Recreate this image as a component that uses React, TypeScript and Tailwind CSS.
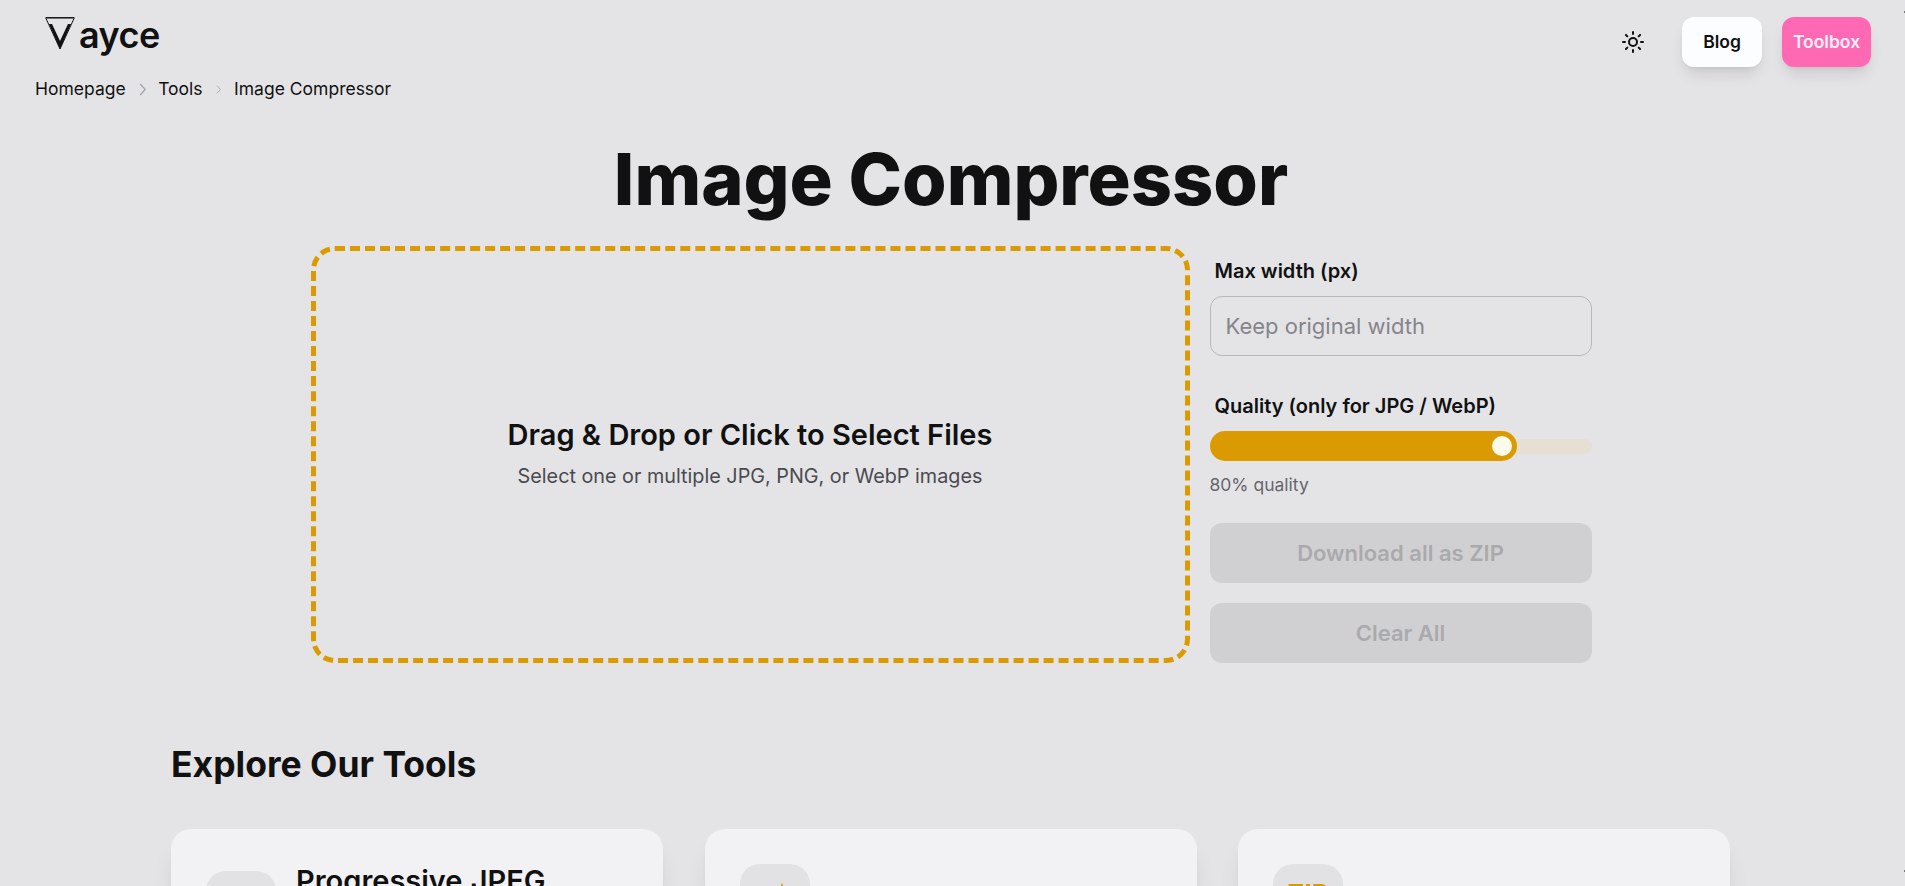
import { Sun } from "lucide-react";
import type { ReactNode } from "react";

const FONT = "[font-family:Inter,sans-serif]";

function Logo() {
  return (
    <div className="flex items-end pl-[45px] h-[56px]">
      <svg width="30" height="33" viewBox="0 0 30 33" className="mb-[6px] shrink-0">
        <path d="M0.5 0.8H29.5" stroke="#111" strokeWidth="1.5" fill="none" />
        <path d="M1 1.5L15 32L29 1.5" stroke="#111" strokeWidth="1" fill="none" />
        <path d="M4 7H7L15 24L23 7H26L15 32Z" fill="#111" />
      </svg>
      <span className="text-[36px] leading-[42px] font-semibold text-[#111] ml-[4px] -tracking-[0.5px]">ayce</span>
    </div>
  );
}

function Chevron({ h }: { h: number }) {
  return (
    <svg width={h / 2 + 1} height={h} viewBox="0 0 7 13" className="mx-[13px] shrink-0">
      <path d="M1 1L6 6.5L1 12" stroke="#a1a1aa" strokeWidth="1.2" fill="none" />
    </svg>
  );
}

function Header() {
  return (
    <header className="flex justify-between">
      <div>
        <Logo />
        <nav className="flex items-center pl-[35px] mt-[21px] text-[17.5px] text-[#111] h-[24px]">
          <span>Homepage</span>
          <Chevron h={13} />
          <span className="-ml-px">Tools</span>
          <Chevron h={9} />
          <span>Image Compressor</span>
        </nav>
      </div>
      <div className="flex items-center h-[50px] mt-[17px] pr-[34px]">
        <Sun size={24} strokeWidth={2} className="text-[#111] mr-[37px]" />
        <button className="w-[80px] h-[50px] rounded-xl bg-[#fcfdff] text-[17.5px] font-semibold text-[#111] shadow-lg mr-[20px]">Blog</button>
        <button className="w-[89px] h-[50px] rounded-xl bg-[#ff69b4] text-[17.5px] font-semibold text-[#fdf2f8] shadow-lg">Toolbox</button>
      </div>
    </header>
  );
}

function Controls() {
  return (
    <div className="w-[382px] flex flex-col">
      <label className="block text-[20px] font-semibold text-[#111] pl-[5px] leading-[28px] mt-[11px]">Max width (px)</label>
      <input
        placeholder="Keep original width"
        className="w-full h-[60px] mt-[11px] px-[15px] text-[22px] rounded-xl border border-[#b8b8bc] bg-transparent placeholder:text-[#85858a]"
      />
      <label className="block text-[20px] font-semibold text-[#111] pl-[5px] leading-[28px] mt-[36px]">Quality (only for JPG / WebP)</label>
      <div className="relative h-[30px] mt-[11px] flex items-center">
        <div className="w-full h-[15px] rounded-full bg-[#e6e0d4]" />
        <div className="absolute left-0 top-0 h-[30px] w-[307px] rounded-full bg-[#db9b00]" />
        <div className="absolute left-[282px] top-[5px] w-[20px] h-[20px] rounded-full bg-[#fefbeb]" />
      </div>
      <p className="text-[17.5px] text-[#66666b] mt-[12px] leading-[24px]">80% quality</p>
      <button className="w-full h-[60px] mt-[26px] rounded-xl bg-[#d0d0d2] text-[22px] font-semibold text-[#aaaaac]">Download all as ZIP</button>
      <button className="w-full h-[60px] mt-[20px] rounded-xl bg-[#d0d0d2] text-[22px] font-semibold text-[#aaaaac]">Clear All</button>
    </div>
  );
}

function ToolCard({ title, icon }: { title?: string; icon?: ReactNode }) {
  return (
    <div className="w-[492px] h-[300px] shrink-0 rounded-[20px] bg-[#f2f2f4] shadow-xl p-[35px] flex gap-[20px]">
      <div className={`w-[70px] h-[70px] rounded-[20px] bg-[#e2e2e4] flex justify-center text-[26px] font-bold text-[#db9b00] ${title ? "mt-[7px]" : ""}`}>{icon}</div>
      {title && <h3 className="text-[29px] leading-[36px] font-semibold text-[#111] -mt-[1px] [word-spacing:1px]">{title}</h3>}
    </div>
  );
}

export default function App() {
  return (
    <div className={`relative h-[886px] overflow-hidden bg-[#e4e4e7] ${FONT}`}>
      <Header />
      <h1 className="text-center text-[72px] leading-[80px] font-extrabold text-[#111] mt-[38px] pr-[3px]">Image Compressor</h1>
      <main className="flex justify-center gap-[20px] mt-[27px] pr-[3px]">
        <div className="w-[879px] h-[417px] rounded-3xl border-[5px] border-dashed border-[#db9b00] flex flex-col items-center justify-center">
          <h2 className="text-[29px] leading-[36px] font-semibold text-[#111] -mt-[1px]">Drag &amp; Drop or Click to Select Files</h2>
          <p className="text-[19.8px] text-[#4a4a4f] mt-[9px]">Select one or multiple JPG, PNG, or WebP images</p>
        </div>
        <Controls />
      </main>
      <section className="pl-[171px] mt-[78px]">
        <h2 className="text-[35.5px] font-bold text-[#111] leading-[48px]">Explore Our Tools</h2>
        <div className="flex gap-[41.5px] mt-[40px]">
          <ToolCard title="Progressive JPEG" />
          <ToolCard icon={<span className="pt-[11px] pl-[15px]">★</span>} />
          <ToolCard icon={<span className="pt-[10px]">ZIP</span>} />
        </div>
      </section>
      {/* scrollbar arrow remnants at the window edge */}
      <div className="absolute right-0 top-[11px] w-px h-[2px] bg-[#777]" />
      <div className="absolute right-0 top-[870px] w-px h-[2px] bg-[#777]" />
    </div>
  );
}
